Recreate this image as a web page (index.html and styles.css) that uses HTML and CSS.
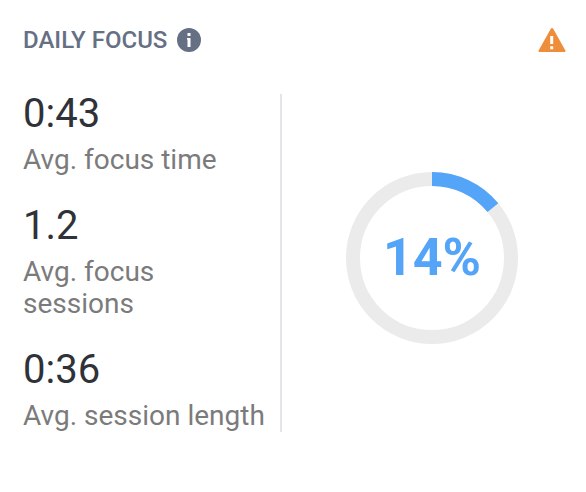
FILE: index.html
```html
<!DOCTYPE html>
<html lang="en">
<head>
    <meta charset="UTF-8">
    <meta name="viewport" content="width=device-width, initial-scale=1.0">
    <title>Daily Focus</title>
    <link rel="stylesheet" href="styles.css">
</head>
<body>
    <section class="card">
        <header class="card-header">
            <h1 class="title">Daily Focus</h1>
            <svg class="info-icon" viewBox="0 0 24 24" role="img" aria-label="Info">
                <circle cx="12" cy="12" r="12" fill="#667084"/>
                <path d="M10.5 5h3v3h-3zM10 10h3.5v9h-3v-7.5H10z" fill="#fff"/>
            </svg>
            <svg class="warning-icon" viewBox="0 0 28 24" role="img" aria-label="Warning">
                <path d="M12.8.8a1.4 1.4 0 0 1 2.4 0l12.2 21.6a1.1 1.1 0 0 1-1 1.6H1.6a1.1 1.1 0 0 1-1-1.6z" fill="#ee8e3b"/>
                <path d="M12.2 8h3v8h-3zM12.2 18.2h3v3h-3z" fill="#fff"/>
            </svg>
        </header>

        <div class="card-body">
            <!-- Averages -->
            <dl class="stats">
                <div class="stat">
                    <dt class="label">Avg. focus time</dt>
                    <dd class="value">0:43</dd>
                </div>
                <div class="stat">
                    <dt class="label">Avg. focus sessions</dt>
                    <dd class="value">1.2</dd>
                </div>
                <div class="stat">
                    <dt class="label">Avg. session length</dt>
                    <dd class="value">0:36</dd>
                </div>
            </dl>

            <!-- Progress ring -->
            <div class="chart">
                <svg class="ring" viewBox="0 0 172 172" aria-hidden="true">
                    <circle class="track" cx="86" cy="86" r="79"/>
                    <circle class="progress" cx="86" cy="86" r="79" pathLength="100" stroke-dasharray="14 86" transform="rotate(-90 86 86)"/>
                </svg>
                <span class="percent">14%</span>
            </div>
        </div>
    </section>
</body>
</html>
```
FILE: styles.css
```css
body {
    margin: 0;
    background: #fff;
    font-family: Roboto, Arial, sans-serif;
}

.card {
    padding: 24px 4px 24px 23px;
}

.card-header {
    display: flex;
    align-items: center;
    margin-bottom: 38px;
    padding-right: 16px;
}

.title {
    margin: 0;
    font-size: 24px;
    font-weight: 500;
    line-height: 32px;
    color: #667084;
    text-transform: uppercase;
}

.info-icon {
    width: 24px;
    height: 24px;
    margin-left: 10px;
}

.warning-icon {
    width: 28px;
    height: 24px;
    margin-left: auto;
}

.card-body {
    display: grid;
    grid-template-columns: 259fr 300fr;
}

.stats {
    display: flex;
    flex-direction: column;
    gap: 30px;
    margin: 0;
    padding-right: 12px;
    border-right: 2px solid #e2e6ea;
}

.stat {
    display: flex;
    flex-direction: column-reverse;
    gap: 10px;
}

.value {
    margin: 0;
    font-size: 40px;
    line-height: 40px;
    color: #2f3238;
}

.label {
    font-size: 28px;
    line-height: 32px;
    color: #7b7b7b;
}

.chart {
    display: grid;
    place-items: center;
    align-self: center;
    padding-bottom: 10px;
}

.ring,
.percent {
    grid-area: 1 / 1;
}

.ring {
    width: 172px;
    height: 172px;
}

.track,
.progress {
    fill: none;
    stroke: #ebebeb;
    stroke-width: 14px;
}

.progress {
    stroke: #54a4f8;
}

.percent {
    font-size: 52px;
    font-weight: 700;
    line-height: 60px;
    color: #54a4f8;
}
```
